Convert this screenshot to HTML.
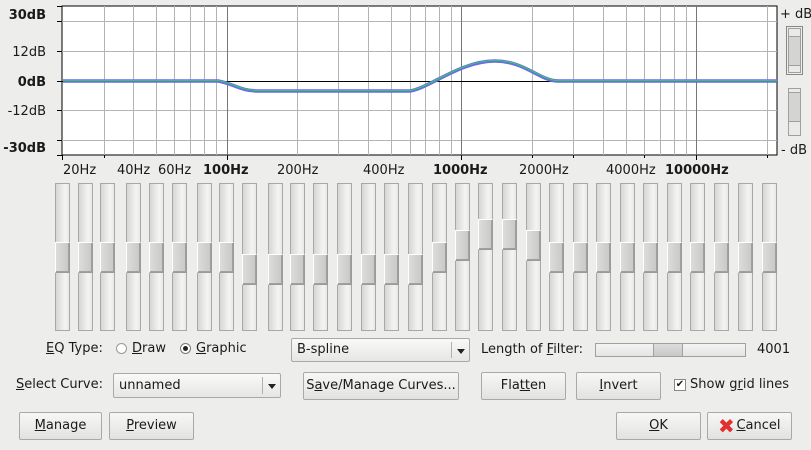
<!DOCTYPE html>
<html><head><meta charset="utf-8"><style>
*{box-sizing:border-box;margin:0;padding:0}
body{width:811px;height:450px;background:#ededeb;font-family:"DejaVu Sans","Liberation Sans",sans-serif;font-size:13px;color:#1a1a1a;position:relative;overflow:hidden}
.a{position:absolute;white-space:nowrap}
.sl{position:absolute;top:183px;width:15px;height:148px;border:1px solid #a8a8a6;background:linear-gradient(90deg,#d6d6d4,#f4f4f3 70%,#e8e8e6)}
.th{position:absolute;left:-1px;width:15px;height:31px;border:1px solid #9a9a98;border-top-color:#fff;border-left-color:#fff;background:linear-gradient(90deg,#dcdcda,#c8c8c6);box-shadow:inset -1px -1px 0 #a0a09e}
.btn{position:absolute;border:1px solid #a9a9a7;border-radius:2px;background:linear-gradient(#f7f7f6,#e2e2e0);text-align:center;line-height:26px}
.cb{position:absolute;border:1px solid #a9a9a7;border-radius:2px;background:linear-gradient(#f9f9f8,#e6e6e4);line-height:22px;padding-left:5px}
.cb i{position:absolute;right:0;top:3px;bottom:3px;width:18px;border-left:1px solid #b0b0ae}
.cb i:after{content:"";position:absolute;left:5px;top:7px;border:4px solid transparent;border-top:5px solid #222}
u{text-decoration:underline}
</style></head><body>
<svg class="a" style="left:0;top:0" width="811" height="180">
<rect x="62" y="6" width="715" height="149" fill="#fff" stroke="#000"/>
<g stroke="#b4b4b4" stroke-width="1">
<line x1="62" x2="777" y1="21.5" y2="21.5"/><line x1="62" x2="777" y1="51.5" y2="51.5"/><line x1="62" x2="777" y1="110.5" y2="110.5"/><line x1="62" x2="777" y1="140.5" y2="140.5"/>
<g transform="translate(0.5,0)">
<line x1="104" x2="104" y1="6" y2="155"/><line x1="133" x2="133" y1="6" y2="155"/><line x1="156" x2="156" y1="6" y2="155"/><line x1="174" x2="174" y1="6" y2="155"/><line x1="190" x2="190" y1="6" y2="155"/><line x1="204" x2="204" y1="6" y2="155"/><line x1="216" x2="216" y1="6" y2="155"/>
<line x1="297" x2="297" y1="6" y2="155"/><line x1="338" x2="338" y1="6" y2="155"/><line x1="368" x2="368" y1="6" y2="155"/><line x1="391" x2="391" y1="6" y2="155"/><line x1="410" x2="410" y1="6" y2="155"/><line x1="425" x2="425" y1="6" y2="155"/><line x1="439" x2="439" y1="6" y2="155"/><line x1="451" x2="451" y1="6" y2="155"/>
<line x1="532" x2="532" y1="6" y2="155"/><line x1="573" x2="573" y1="6" y2="155"/><line x1="603" x2="603" y1="6" y2="155"/><line x1="626" x2="626" y1="6" y2="155"/><line x1="644" x2="644" y1="6" y2="155"/><line x1="660" x2="660" y1="6" y2="155"/><line x1="674" x2="674" y1="6" y2="155"/><line x1="686" x2="686" y1="6" y2="155"/><line x1="767" x2="767" y1="6" y2="155"/>
</g></g>
<g stroke="#777"><line x1="227.5" x2="227.5" y1="6" y2="155"/><line x1="461.5" x2="461.5" y1="6" y2="155"/><line x1="696.5" x2="696.5" y1="6" y2="155"/></g>
<line x1="62" x2="777" y1="81.5" y2="81.5" stroke="#000"/>
<g stroke="#000"><line x1="57" x2="62" y1="6.5" y2="6.5"/><line x1="57" x2="62" y1="21.5" y2="21.5"/><line x1="57" x2="62" y1="51.5" y2="51.5"/><line x1="57" x2="62" y1="81.5" y2="81.5"/><line x1="57" x2="62" y1="110.5" y2="110.5"/><line x1="57" x2="62" y1="140.5" y2="140.5"/><line x1="57" x2="62" y1="155.5" y2="155.5"/>
<line x1="62.5" x2="62.5" y1="155" y2="160"/><line x1="104.5" x2="104.5" y1="155" y2="158"/><line x1="227.5" x2="227.5" y1="155" y2="160"/><line x1="461.5" x2="461.5" y1="155" y2="160"/><line x1="696.5" x2="696.5" y1="155" y2="160"/><line x1="532.5" x2="532.5" y1="155" y2="158"/><line x1="573.5" x2="573.5" y1="155" y2="158"/><line x1="644.5" x2="644.5" y1="155" y2="158"/><line x1="767.5" x2="767.5" y1="155" y2="158"/></g>
<path d="M63 81 L218 81 C232 83,240 91,258 91 L410 91 C430 88,460 61,495 61 C525 61,540 81,558 81 L777 81" fill="none" stroke="#6a6aee" stroke-width="3.5"/>
<path d="M63 80.5 L218 80.5 C232 82.5,240 90.5,258 90.5 L410 90.5 C430 87.5,460 60.5,495 60.5 C525 60.5,540 80.5,558 80.5 L777 80.5" fill="none" stroke="#22ee22" stroke-width="0.8"/>
<g font-family="DejaVu Sans, sans-serif" font-size="13" text-anchor="end" fill="#1a1a1a">
<text x="46" y="19" font-weight="bold">30dB</text><text x="46" y="56">12dB</text><text x="46" y="86" font-weight="bold">0dB</text><text x="46" y="115">-12dB</text><text x="46" y="152" font-weight="bold">-30dB</text></g>
<g font-family="DejaVu Sans, sans-serif" font-size="13" fill="#1a1a1a">
<text x="63" y="174">20Hz</text><text x="117" y="174">40Hz</text><text x="158" y="174">60Hz</text><text x="203" y="174" font-weight="bold">100Hz</text><text x="277" y="174">200Hz</text><text x="363" y="174">400Hz</text><text x="433" y="174" font-weight="bold">1000Hz</text><text x="519" y="174">2000Hz</text><text x="606" y="174">4000Hz</text><text x="665" y="174" font-weight="bold">10000Hz</text>
<text x="780" y="18">+ dB</text><text x="781" y="154">- dB</text></g>
<rect x="786.5" y="26.5" width="16" height="48" fill="none" stroke="#222" stroke-dasharray="1,1"/>
<rect x="788.5" y="28.5" width="12" height="44" fill="#eaeaea" stroke="#a0a0a0"/><rect x="788.5" y="36.5" width="12" height="29" fill="#d4d4d2" stroke="#a0a0a0"/>
<rect x="788.5" y="88.5" width="12" height="47" fill="#eaeaea" stroke="#a0a0a0"/><rect x="788.5" y="92.5" width="12" height="29" fill="#d4d4d2" stroke="#a0a0a0"/>
</svg>

<div class="sl" style="left:55px"><div class="th" style="top:58px"></div></div>
<div class="sl" style="left:78px"><div class="th" style="top:58px"></div></div>
<div class="sl" style="left:100px"><div class="th" style="top:58px"></div></div>
<div class="sl" style="left:126px"><div class="th" style="top:58px"></div></div>
<div class="sl" style="left:149px"><div class="th" style="top:58px"></div></div>
<div class="sl" style="left:172px"><div class="th" style="top:58px"></div></div>
<div class="sl" style="left:197px"><div class="th" style="top:58px"></div></div>
<div class="sl" style="left:219px"><div class="th" style="top:58px"></div></div>
<div class="sl" style="left:242px"><div class="th" style="top:70px"></div></div>
<div class="sl" style="left:268px"><div class="th" style="top:70px"></div></div>
<div class="sl" style="left:290px"><div class="th" style="top:70px"></div></div>
<div class="sl" style="left:313px"><div class="th" style="top:70px"></div></div>
<div class="sl" style="left:337px"><div class="th" style="top:70px"></div></div>
<div class="sl" style="left:361px"><div class="th" style="top:70px"></div></div>
<div class="sl" style="left:384px"><div class="th" style="top:70px"></div></div>
<div class="sl" style="left:408px"><div class="th" style="top:70px"></div></div>
<div class="sl" style="left:432px"><div class="th" style="top:58px"></div></div>
<div class="sl" style="left:455px"><div class="th" style="top:46px"></div></div>
<div class="sl" style="left:478px"><div class="th" style="top:35px"></div></div>
<div class="sl" style="left:502px"><div class="th" style="top:35px"></div></div>
<div class="sl" style="left:526px"><div class="th" style="top:46px"></div></div>
<div class="sl" style="left:549px"><div class="th" style="top:58px"></div></div>
<div class="sl" style="left:573px"><div class="th" style="top:58px"></div></div>
<div class="sl" style="left:596px"><div class="th" style="top:58px"></div></div>
<div class="sl" style="left:620px"><div class="th" style="top:58px"></div></div>
<div class="sl" style="left:643px"><div class="th" style="top:58px"></div></div>
<div class="sl" style="left:667px"><div class="th" style="top:58px"></div></div>
<div class="sl" style="left:690px"><div class="th" style="top:58px"></div></div>
<div class="sl" style="left:714px"><div class="th" style="top:58px"></div></div>
<div class="sl" style="left:738px"><div class="th" style="top:58px"></div></div>
<div class="sl" style="left:762px"><div class="th" style="top:58px"></div></div>

<div class="a" style="left:46px;top:341px"><u>E</u>Q Type:</div>
<div class="a" style="left:116px;top:343px;width:11px;height:11px;border:1px solid #999;border-radius:50%;background:#fff"></div>
<div class="a" style="left:132px;top:341px"><u>D</u>raw</div>
<div class="a" style="left:180px;top:343px;width:11px;height:11px;border:1px solid #777;border-radius:50%;background:#fff"><div style="position:absolute;left:2px;top:2px;width:5px;height:5px;border-radius:50%;background:#222"></div></div>
<div class="a" style="left:196px;top:341px"><u>G</u>raphic</div>
<div class="cb" style="left:291px;top:338px;width:179px;height:24px">B-spline<i></i></div>
<div class="a" style="left:481px;top:342px">Length of <u>F</u>ilter:</div>
<div class="a" style="left:595px;top:343px;width:151px;height:14px;border:1px solid #a0a0a0;background:linear-gradient(#f4f4f4,#e4e4e4)"><div style="position:absolute;left:57px;top:0;width:30px;height:12px;border-left:1px solid #a0a0a0;border-right:1px solid #a0a0a0;background:linear-gradient(#dcdcdc,#c8c8c8)"></div></div>
<div class="a" style="left:757px;top:342px">4001</div>

<div class="a" style="left:16px;top:377px"><u>S</u>elect Curve:</div>
<div class="cb" style="left:113px;top:373px;width:168px;height:25px;line-height:23px">unnamed<i></i></div>
<div class="btn" style="left:303px;top:372px;width:156px;height:28px">S<u>a</u>ve/Manage Curves...</div>
<div class="btn" style="left:481px;top:372px;width:85px;height:28px">Fla<u>tt</u>en</div>
<div class="btn" style="left:576px;top:372px;width:85px;height:28px"><u>I</u>nvert</div>
<div class="a" style="left:674px;top:379px;width:12px;height:12px;border:1px solid #888;background:#fff;font-size:10px;line-height:10px;text-align:center;font-weight:bold">✔</div>
<div class="a" style="left:690px;top:377px">Show g<u>r</u>id lines</div>

<div class="btn" style="left:19px;top:412px;width:83px;height:28px"><u>M</u>anage</div>
<div class="btn" style="left:109px;top:412px;width:85px;height:28px"><u>P</u>review</div>
<div class="btn" style="left:616px;top:412px;width:85px;height:28px"><u>O</u>K</div>
<div class="btn" style="left:707px;top:412px;width:85px;height:28px;padding-left:18px"><span style="position:absolute;left:10px;top:0;color:#e03030;font-size:20px;font-weight:bold">✖</span><u>C</u>ancel</div>
</body></html>
